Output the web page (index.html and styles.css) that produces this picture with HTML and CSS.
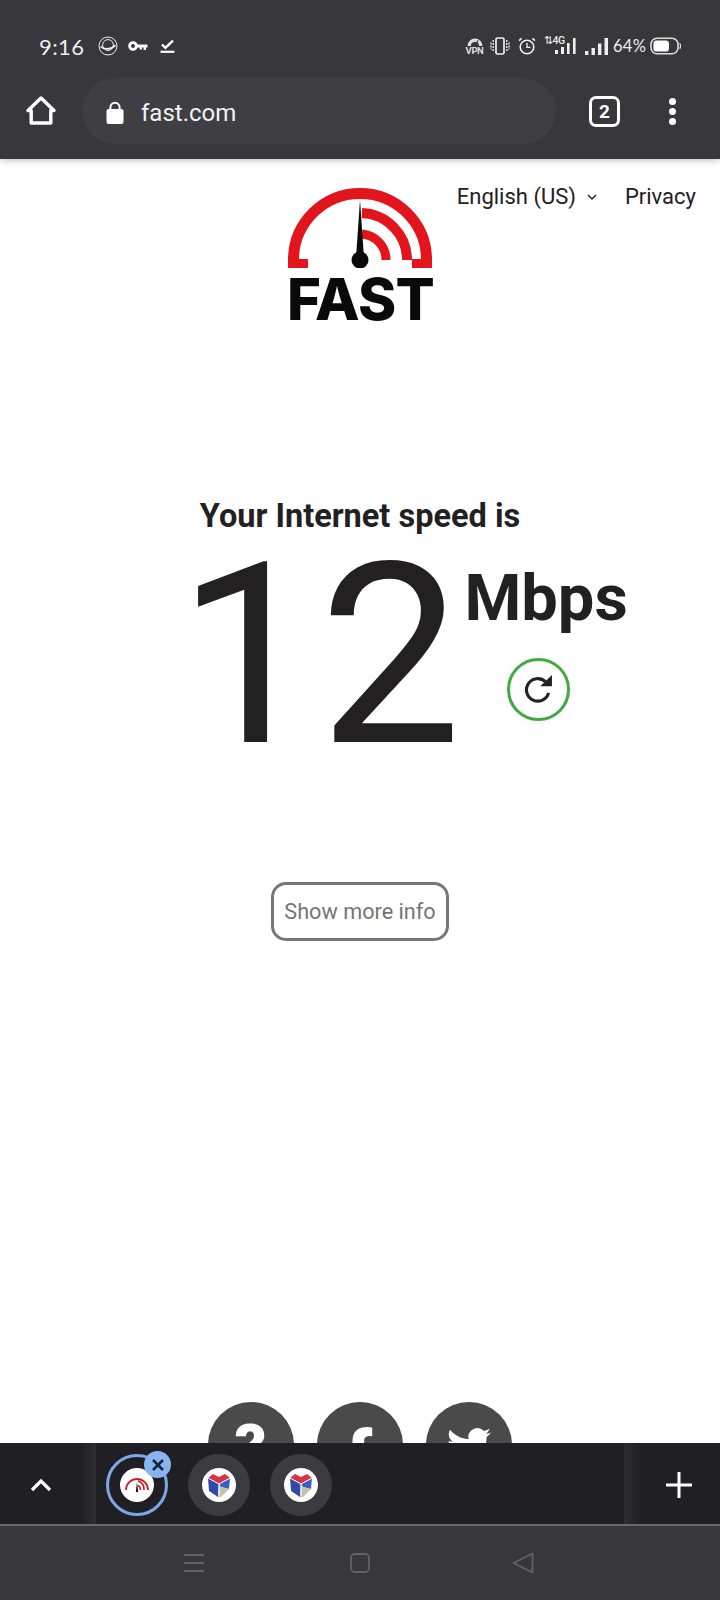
FILE: index.html
```html
<!DOCTYPE html>
<html lang="en">
<head>
<meta charset="utf-8">
<title>fast.com</title>
<link rel="stylesheet" href="styles.css">
</head>
<body>
<div class="phone">
  <header class="chrome">
    <div class="status">
      <div class="status-left">
        <span class="time">9:16</span>
        <svg class="ic-planet" viewBox="0 0 20 20"><circle cx="10" cy="10" r="9" fill="none" stroke="#eee" stroke-width="1"/><circle cx="10" cy="9" r="5.4" fill="none" stroke="#eee" stroke-width="1"/><path d="M2.5 10.5c3 3.2 10 3.6 15-1.2" fill="none" stroke="#eee" stroke-width="1.6"/></svg>
        <svg class="ic-key" viewBox="0 0 20 10"><circle cx="5" cy="5" r="3.4" fill="none" stroke="#fff" stroke-width="2.8"/><path d="M8 3.4h11.5v3.2H18v2.4h-2.4V6.6H14v2h-2.4v-2H8z" fill="#fff"/></svg>
        <svg class="ic-check" viewBox="0 0 15 15"><path d="M2 5.5l3.4 3.4L13 1.6" fill="none" stroke="#fff" stroke-width="2.4"/><path d="M0.5 12.8h14" stroke="#fff" stroke-width="2.2"/></svg>
      </div>
      <div class="status-right">
        <div class="vpn">
          <svg viewBox="0 0 18 9"><path d="M1.5 9a7.5 7.5 0 0 1 15 0h-3.4a4.1 4.1 0 0 0-8.2 0z" fill="#ddd"/><path d="M9 8.5l3-5" stroke="#37373c" stroke-width="1.4"/></svg>
          <span>VPN</span>
        </div>
        <svg class="ic-vib" viewBox="0 0 20 18"><rect x="6" y="1" width="8" height="16" rx="1.6" fill="none" stroke="#eee" stroke-width="1.7"/><path d="M3.2 3v12M1 5.5v7M16.8 3v12M19 5.5v7" stroke="#eee" stroke-width="1.3" stroke-dasharray="2 1"/></svg>
        <svg class="ic-alarm" viewBox="0 0 18 18"><circle cx="9" cy="10" r="6.8" fill="none" stroke="#eee" stroke-width="1.6"/><path d="M9 6v4.4h3.4" fill="none" stroke="#eee" stroke-width="1.4"/><path d="M1 3.6l2.6-2.2M17 3.6l-2.6-2.2" stroke="#eee" stroke-width="1.6"/></svg>
        <div class="net">
          <span class="net-label">&#8645;4G</span>
          <svg viewBox="0 0 22 16"><path d="M1 12h3v4H1zM7 9h3v7H7zM13 5h2.6v11H13zM19 0h2.6v16H19z" fill="#eee"/></svg>
        </div>
        <svg class="ic-signal" viewBox="0 0 23 17"><path d="M0 13h3.4v4H0zM6.5 10h3.4v7H6.5zM13 5.5h3.4V17H13zM19.5 0H23v17h-3.5z" fill="#eee"/></svg>
        <span class="pct">64%</span>
        <svg class="ic-batt" viewBox="0 0 31 18"><rect x="1" y="1.2" width="27" height="15.6" rx="6" fill="none" stroke="#ddd" stroke-width="1.6"/><rect x="3.4" y="3.4" width="15.6" height="11.2" rx="3.4" fill="#fff"/><path d="M29.6 6.4a4 4 0 0 1 0 5.2" fill="none" stroke="#ddd" stroke-width="1.4"/></svg>
      </div>
    </div>
    <div class="toolbar">
      <svg class="ic-home" viewBox="0 0 32 32"><path d="M16 3L3 15.5h3.2V28h19.6V15.5H29z" fill="none" stroke="#fff" stroke-width="3.4" stroke-linejoin="round"/></svg>
      <div class="omnibox">
        <svg class="ic-lock" viewBox="0 0 18 24"><path d="M4.4 9V6.4a4.6 4.6 0 0 1 9.2 0V9" fill="none" stroke="#fff" stroke-width="2"/><rect x="0.5" y="8" width="17" height="15" rx="2.2" fill="#fff"/></svg>
        <span class="url">fast.com</span>
      </div>
      <div class="tabcount">2</div>
      <div class="kebab"><i></i><i></i><i></i></div>
    </div>
  </header>

  <main class="page">
    <div class="top">
      <div class="logo">
        <svg class="gauge" viewBox="0 0 144 80">
          <path d="M5.5 72a66.5 66.5 0 0 1 133 0" fill="none" stroke="#e2141c" stroke-width="11"/>
          <path d="M0 71h20v9H0zM124 71h20v9h-20z" fill="#e2141c"/>
          <path d="M74 25a47 47 0 0 1 45 47" fill="none" stroke="#e2141c" stroke-width="10"/>
          <path d="M74 46a26 26 0 0 1 24 26" fill="none" stroke="#e2141c" stroke-width="9"/>
          <path d="M72 12l4 58h-8z" fill="#0a0a0a"/>
          <circle cx="72" cy="72" r="8.5" fill="#0a0a0a"/>
        </svg>
        <div class="wordmark">FAST</div>
      </div>
      <nav class="topnav">
        <span class="lang">English (US)</span>
        <svg class="ic-caret" viewBox="0 0 10 7"><path d="M1 1l4 4 4-4" fill="none" stroke="#222" stroke-width="1.5"/></svg>
        <span class="privacy">Privacy</span>
      </nav>
    </div>

    <h1 class="headline">Your Internet speed is</h1>
    <div class="speed">
      <div class="digits">12</div>
      <div class="unit-col">
        <div class="unit">Mbps</div>
        <div class="refresh">
          <svg viewBox="0 0 32 32"><path d="M25.4 18.5A10 10 0 1 1 22.6 8.6" fill="none" stroke="#222" stroke-width="2.8"/><path d="M18 12.6h10.4V2.6z" fill="#222"/></svg>
        </div>
      </div>
    </div>
    <button class="more" type="button">Show more info</button>

    <div class="social">
      <div class="soc soc-q">?</div>
      <div class="soc soc-f">f</div>
      <div class="soc soc-t">
        <svg viewBox="0 0 24 24"><path d="M23.953 4.57a10 10 0 01-2.825.775 4.958 4.958 0 002.163-2.723c-.951.555-2.005.959-3.127 1.184a4.92 4.92 0 00-8.384 4.482C7.69 8.095 4.067 6.13 1.64 3.162a4.822 4.822 0 00-.666 2.475c0 1.71.87 3.213 2.188 4.096a4.904 4.904 0 01-2.228-.616v.06a4.923 4.923 0 003.946 4.827 4.996 4.996 0 01-2.212.085 4.936 4.936 0 004.604 3.417 9.867 9.867 0 01-6.102 2.105c-.39 0-.779-.023-1.17-.067a13.995 13.995 0 007.557 2.209c9.053 0 13.998-7.496 13.998-13.985 0-.21 0-.42-.015-.63A9.935 9.935 0 0024 4.59z" fill="#fff"/></svg>
      </div>
    </div>
  </main>

  <section class="tabstrip">
    <div class="strip-side strip-left">
      <svg class="ic-up" viewBox="0 0 22 14"><path d="M2 12l9-9 9 9" fill="none" stroke="#fff" stroke-width="3.2"/></svg>
    </div>
    <div class="strip-tabs">
      <div class="tab tab-active">
        <div class="fav">
          <svg viewBox="0 0 34 34"><path d="M6 22a11 11 0 0 1 22 0" fill="none" stroke="#c8202a" stroke-width="1.8"/><path d="M18 13a9 9 0 0 1 6 9M18 17.5a5 5 0 0 1 2.5 4.5" fill="none" stroke="#c8202a" stroke-width="1.6"/><path d="M17 14l1.2 10h-2.4z" fill="#111"/></svg>
        </div>
        <div class="tab-close">
          <svg viewBox="0 0 14 14"><path d="M2 2l10 10M12 2L2 12" stroke="#14243c" stroke-width="2.6"/></svg>
        </div>
      </div>
      <div class="tab">
        <div class="fav">
          <svg viewBox="0 0 34 34"><path d="M6 10l5-4 6 3 6-3 5 4-11 6z" fill="#d8324a"/><path d="M6 10l11 6-1 13-9-6z" fill="#2f4aa8"/><path d="M28 10l-11 6 2 3 8 2z" fill="#3a5fc0"/><path d="M17 16l-1 13 3 0 8-8-8-2z" fill="#c9bfae"/><path d="M17 16v12M17 16L6 10M17 16l11-6" stroke="#fff" stroke-width="1"/></svg>
        </div>
      </div>
      <div class="tab">
        <div class="fav">
          <svg viewBox="0 0 34 34"><path d="M6 10l5-4 6 3 6-3 5 4-11 6z" fill="#d8324a"/><path d="M6 10l11 6-1 13-9-6z" fill="#2f4aa8"/><path d="M28 10l-11 6 2 3 8 2z" fill="#3a5fc0"/><path d="M17 16l-1 13 3 0 8-8-8-2z" fill="#c9bfae"/><path d="M17 16v12M17 16L6 10M17 16l11-6" stroke="#fff" stroke-width="1"/></svg>
        </div>
      </div>
    </div>
    <div class="strip-side strip-right">
      <svg class="ic-plus" viewBox="0 0 26 26"><path d="M13 0v26M0 13h26" stroke="#fff" stroke-width="3"/></svg>
    </div>
  </section>

  <footer class="navbar">
    <svg class="ic-menu" viewBox="0 0 20 18"><path d="M0 1h20M0 9h20M0 17h20" stroke="#626266" stroke-width="1.8"/></svg>
    <svg class="ic-square" viewBox="0 0 20 20"><rect x="1" y="1" width="18" height="18" rx="4" fill="none" stroke="#626266" stroke-width="1.8"/></svg>
    <svg class="ic-back" viewBox="0 0 22 22"><path d="M20.5 1.5v19L1.5 11z" fill="none" stroke="#626266" stroke-width="1.8" stroke-linejoin="round"/></svg>
  </footer>
</div>
</body>
</html>
```
FILE: styles.css
```css
* { box-sizing: border-box; }
html, body { margin: 0; padding: 0; }
body { font-family: Roboto, "Liberation Sans", sans-serif; background: #fff; }
svg { display: block; flex: none; }

.phone { width: 720px; height: 1600px; display: flex; flex-direction: column; overflow: hidden; }

/* Browser chrome */
.chrome { height: 159px; flex: none; background: #37373c; padding-top: 32px; box-shadow: 0 2px 6px rgba(0,0,0,.22); position: relative; z-index: 2; }
.status { height: 28px; display: flex; justify-content: space-between; align-items: center; padding: 0 39px; }
.status-left, .status-right { display: flex; align-items: center; }
.time { font-family: Lato, sans-serif; font-size: 22px; letter-spacing: .4px; color: #eee; width: 59px; }
.ic-planet { width: 20px; height: 20px; margin-right: 10px; }
.ic-key { width: 20px; height: 10px; margin-right: 12px; }
.ic-check { width: 15px; height: 15px; }

.status-right { gap: 0; }
.vpn { width: 19px; display: flex; flex-direction: column; align-items: center; margin-right: 6px; }
.vpn svg { width: 18px; height: 9px; }
.vpn span { font-size: 9.5px; line-height: 9px; font-weight: 700; color: #ddd; letter-spacing: -.4px; }
.ic-vib { width: 20px; height: 18px; margin-right: 8px; }
.ic-alarm { width: 18px; height: 18px; margin-right: 8px; }
.net { position: relative; width: 32px; height: 20px; margin-right: 9px; }
.net svg { position: absolute; right: 0; bottom: 2px; width: 22px; height: 16px; }
.net-label { position: absolute; left: 0; top: -1px; font-size: 10.5px; line-height: 12px; font-weight: 500; color: #eee; letter-spacing: -.5px; }
.ic-signal { width: 23px; height: 17px; margin-right: 5px; }
.pct { font-family: Lato, sans-serif; font-size: 16.5px; color: #eee; letter-spacing: .3px; margin-right: 6px; width: 31px; }
.ic-batt { width: 31px; height: 18px; }

.toolbar { height: 66px; margin-top: 18px; display: flex; align-items: center; }
.ic-home { width: 32px; height: 32px; margin-left: 25px; margin-right: 25px; }
.omnibox { width: 474px; height: 66px; border-radius: 33px; background: #3e3e43; display: flex; align-items: center; padding: 3px 0 0 24px; }
.ic-lock { width: 18px; height: 24px; margin-right: 17px; }
.url { font-size: 24px; color: #f1f1f1; }
.tabcount { width: 31px; height: 31px; margin-left: 33px; border: 3px solid #fff; border-radius: 7px; color: #fff; font-size: 19px; font-weight: 700; line-height: 25px; text-align: center; }
.kebab { margin-left: 49px; display: flex; flex-direction: column; gap: 3px; }
.kebab i { display: block; width: 7px; height: 7px; border-radius: 50%; background: #fff; }

/* Page */
.page { flex: 1; min-height: 0; overflow: hidden; background: #fff; padding-top: 29px; color: #222021; display: flex; flex-direction: column; align-items: center; }
.top { width: 100%; display: grid; grid-template-columns: 1fr 144px 1fr; align-items: start; }
.logo { grid-column: 2; width: 144px; }
.gauge { width: 144px; height: 80px; }
.wordmark { font-family: Inter, sans-serif; font-weight: 800; font-size: 58px; line-height: 52px; margin: 5px 0 -5px -1px; color: #0a0a0a; text-align: center; letter-spacing: -.6px; white-space: nowrap; }
.topnav { grid-column: 3; justify-self: end; display: flex; align-items: center; margin-top: -9px; padding-right: 24px; font-size: 22px; line-height: 36px; color: #222021; }
.ic-caret { width: 10px; height: 7px; margin-left: 11px; margin-right: 28px; }

.headline { margin: 176px 0 0; font-size: 32.5px; line-height: 40px; font-weight: 700; color: #222021; text-align: center; }
.speed { width: 100%; display: flex; align-items: flex-start; margin-top: 20px; padding-left: 177px; }
.digits { font-size: 253px; line-height: 200px; font-weight: 430; color: #222021; }
.unit-col { display: flex; flex-direction: column; align-items: center; padding-left: 3px; }
.unit { margin-top: 7px; font-size: 65px; line-height: 70px; font-weight: 700; color: #222021; }
.refresh { width: 63px; height: 63px; margin-top: 25px; margin-right: 16px; border: 3px solid #43a843; border-radius: 50%; display: flex; align-items: center; justify-content: center; box-shadow: 0 0 6px rgba(0,0,0,.08); }
.refresh svg { width: 36px; height: 36px; }

.more { margin-top: 126px; flex: none; width: 178px; height: 59px; border: 3px solid #777; border-radius: 15px; background: #fff; color: #757575; font-family: Roboto, sans-serif; font-size: 21.7px; padding: 0; }

.social { margin-top: 461px; flex: none; display: flex; gap: 23px; padding-right: 1px; }
.soc { width: 86px; height: 86px; border-radius: 50%; background: #4a4a4a; color: #fff; display: flex; justify-content: center; font-weight: 900; flex: none; }
.soc-q { font-size: 62px; line-height: 90px; }
.soc-f { font-size: 70px; line-height: 110px; }
.soc-t { padding-top: 22px; }
.soc-t svg { width: 44px; height: 44px; }

/* Tab strip */
.tabstrip { height: 83px; flex: none; background: #1f1f24; border-bottom: 2px solid #69696d; display: flex; position: relative; z-index: 1; }
.strip-side { flex: none; display: flex; align-items: center; justify-content: center; padding-top: 2px; }
.strip-left { width: 96px; padding-right: 14px; background: linear-gradient(90deg, #1f1f24 84%, #2c2c31 100%); }
.strip-right { width: 96px; padding-left: 14px; background: linear-gradient(270deg, #1f1f24 82%, #2c2c31 100%); }
.ic-up { width: 22px; height: 14px; }
.ic-plus { width: 26px; height: 26px; }
.strip-tabs { flex: 1; display: flex; align-items: center; gap: 20px; padding: 3px 0 0 10px; }
.tab { width: 62px; height: 62px; border-radius: 50%; background: #3c3c40; display: flex; align-items: center; justify-content: center; position: relative; flex: none; }
.tab-active { background: transparent; border: 3px solid #7da7e6; }
.fav { width: 34px; height: 34px; border-radius: 50%; background: #fff; overflow: hidden; }
.fav svg { width: 34px; height: 34px; }
.tab-close { position: absolute; top: -6px; right: -6px; width: 27px; height: 27px; border-radius: 50%; background: #8ab4f0; display: flex; align-items: center; justify-content: center; }
.tab-close svg { width: 14px; height: 14px; }

/* Navigation bar */
.navbar { height: 74px; flex: none; background: #37373c; display: flex; align-items: center; padding: 0 0 0 184px; }
.ic-menu { width: 20px; height: 18px; margin-right: 146px; }
.ic-square { width: 20px; height: 20px; margin-right: 142px; }
.ic-back { width: 22px; height: 22px; }
```
